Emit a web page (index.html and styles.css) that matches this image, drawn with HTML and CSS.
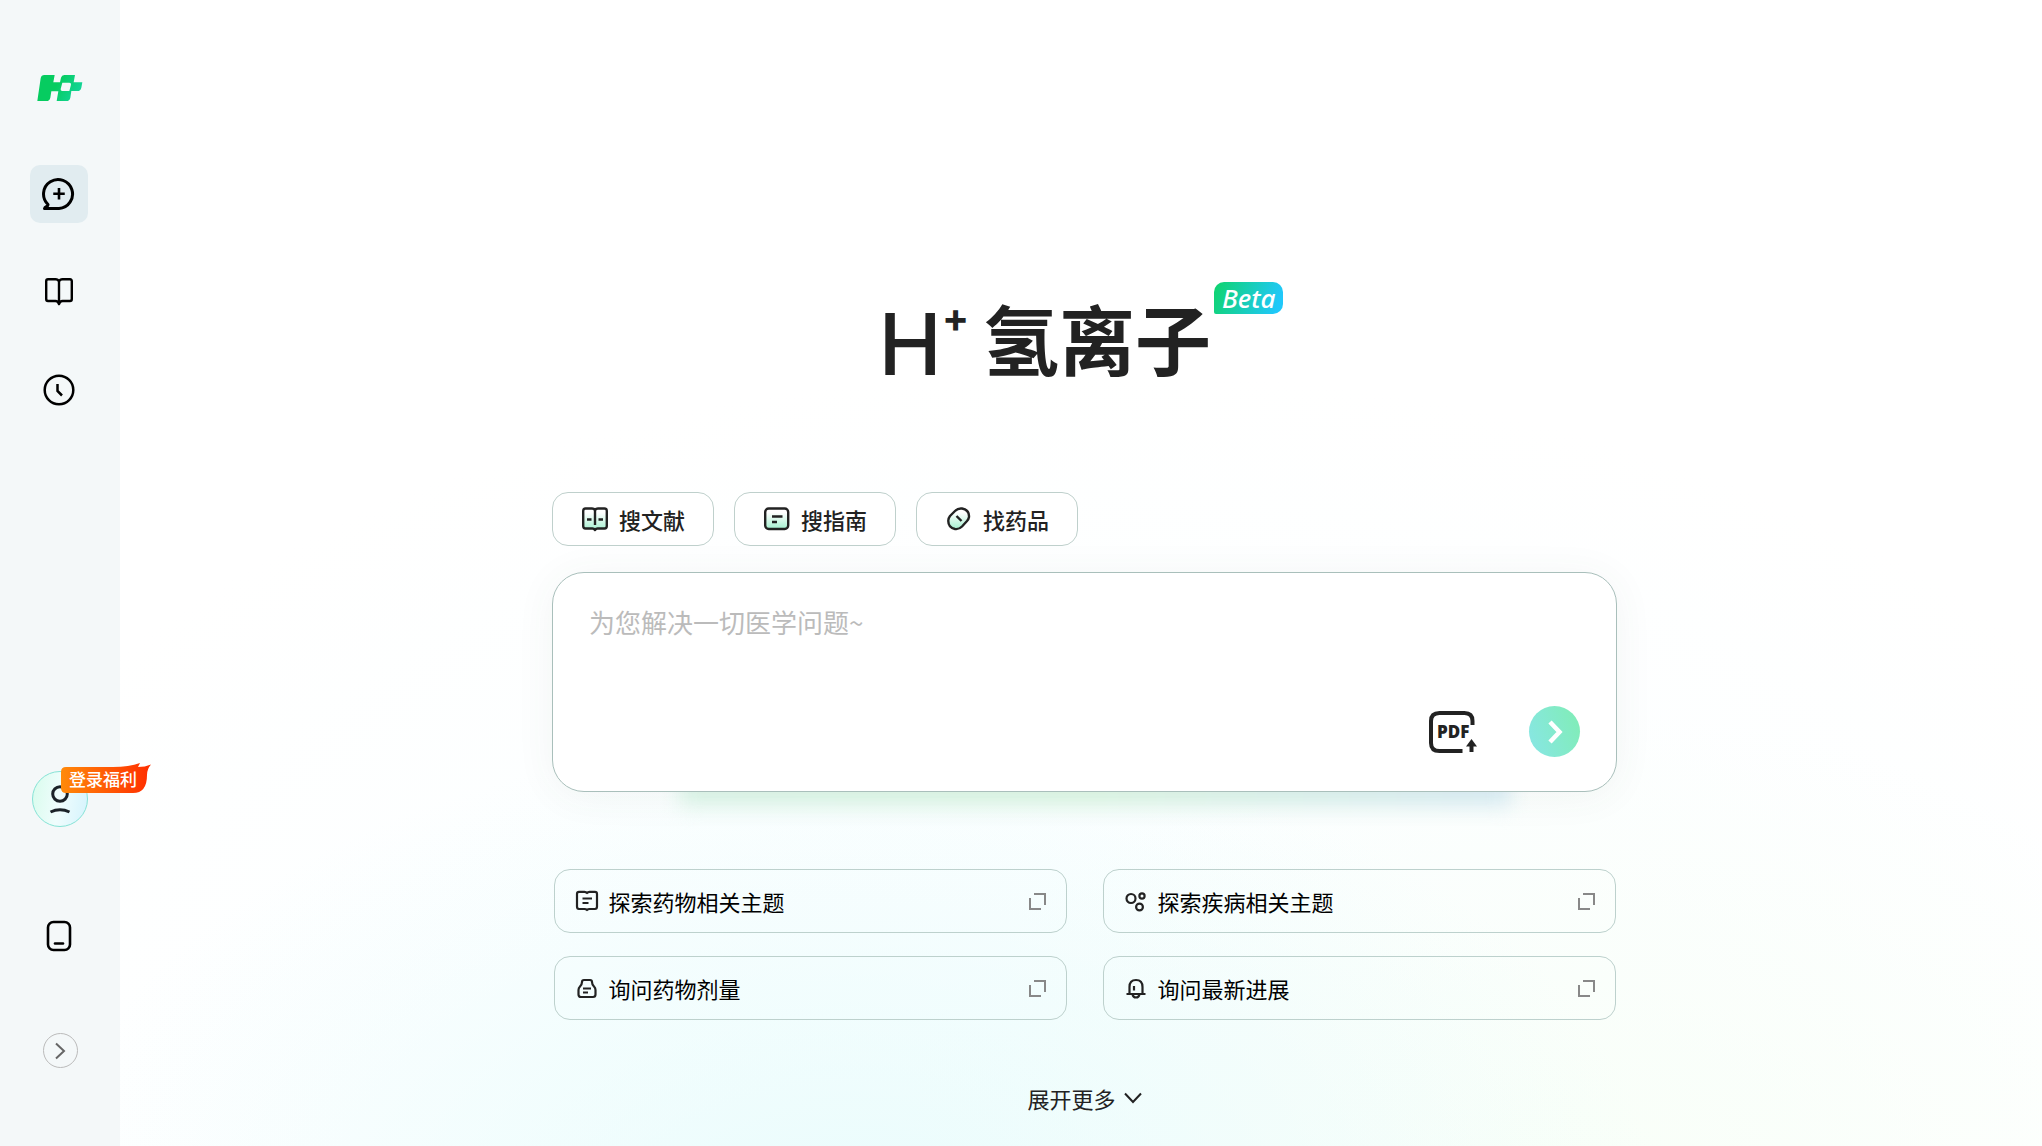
FILE: index.html
```html
<!DOCTYPE html>
<html lang="zh-CN">
  <head>
    <meta charset="UTF-8" />
    <meta name="viewport" content="width=device-width, initial-scale=1.0" />
    <title>H+ 氢离子</title>
    <link rel="stylesheet" href="styles.css">
  </head>
  <body>
    <div class="layout">
      <aside class="sidebar">
        <a class="logo" href="#" aria-label="氢离子">
          <svg width="46" height="28" viewBox="113 72 138 84">
            <defs>
              <linearGradient id="logoFill" x1="0" y1="0" x2="1" y2="0.3">
                <stop offset="0.5" stop-color="#06cc60" />
                <stop offset="1" stop-color="#12d494" />
              </linearGradient>
            </defs>
            <path fill="url(#logoFill)" fill-rule="evenodd" d="M135 75H166L162 97H182L185 83Q187 75 195 75H227L223 97H249L246 113Q244 123 234 123H216L213 143Q211 153 201 153H172L177 124H156L153 143Q151 153 141 153H114L124 85Q126 75 135 75ZM189 98L184 117Q183 123 189 123H210L215 104Q216 98 210 98Z" />
          </svg>
        </a>

        <nav class="nav">
          <button class="nav-btn active" type="button" aria-label="新对话">
            <svg width="34" height="34" viewBox="0 0 34 34" fill="none" stroke="#000" stroke-width="3" stroke-linejoin="round">
              <path d="M17 31.500H2.500C3 29.500 6.500 29.500 6 27.500A14.500 14.500 0 1 1 17 31.500Z" />
              <path d="M17 11V22.500M11.250 16.750H22.750" stroke-width="2.600" />
            </svg>
          </button>
          <button class="nav-btn" type="button" aria-label="知识库">
            <svg width="30" height="30" viewBox="0 0 30 30" fill="none" stroke="#000" stroke-width="2.400" stroke-linejoin="round">
              <path d="M15 4.500Q14 2.300 11.500 2.300H4Q2.200 2.300 2.200 4.200V22Q2.200 24 4 24H11.500Q14 24 15 27Q16 24 18.500 24H26Q27.800 24 27.800 22V4.200Q27.800 2.300 26 2.300H18.500Q16 2.300 15 4.500V27" />
            </svg>
          </button>
          <button class="nav-btn" type="button" aria-label="历史记录">
            <svg width="32" height="32" viewBox="0 0 32 32" fill="none" stroke="#000" stroke-width="2.500">
              <circle cx="16" cy="16" r="14.300" />
              <path d="M14.500 10V17L19 21.500" />
            </svg>
          </button>
        </nav>

        <div class="sidebar-bottom">
          <button class="avatar" type="button">
            <svg width="24" height="32" viewBox="0 0 24 32" fill="none" stroke="#1b2228" stroke-width="3">
              <circle cx="12" cy="11" r="7.300" />
              <path d="M2.500 29Q12 24.500 21.500 29" />
            </svg>
            <span class="login-tag">
              <svg class="login-tag-bg" width="90" height="30" viewBox="0 0 90 30">
                <defs>
                  <linearGradient id="tagFill">
                    <stop offset="0" stop-color="#ff8a0a" />
                    <stop offset="1" stop-color="#ff2d00" />
                  </linearGradient>
                </defs>
                <path fill="url(#tagFill)" d="M5 4H52Q68 4 79 0L77 4Q84 4 90 1.500Q86 6 86 12Q86 30 72 30H5Q0 30 0 25V9Q0 4 5 4Z" />
              </svg>
              <span class="login-tag-text">登录福利</span>
            </span>
          </button>
          <button class="nav-btn device" type="button" aria-label="移动端">
            <svg width="26" height="32" viewBox="0 0 26 32" fill="none" stroke="#000" stroke-width="2.600">
              <rect x="2" y="2" width="22" height="28" rx="5.500" />
              <path d="M9 23.500H17" stroke-linecap="round" />
            </svg>
          </button>
          <button class="expand" type="button" aria-label="展开侧栏">
            <svg width="12" height="18" viewBox="0 0 12 18" fill="none" stroke="#666" stroke-width="2">
              <path d="M2 1.500L10 9L2 16.500" />
            </svg>
          </button>
        </div>
      </aside>

      <main class="main">
        <header class="brand">
          <h1 class="brand-name"><span class="brand-h">H</span><sup class="brand-plus">+</sup><span class="brand-cn">氢离子</span></h1>
          <span class="beta">Beta</span>
        </header>

        <div class="chips">
          <button class="chip" type="button">
            <svg width="28" height="26" viewBox="0 0 28 26" fill="none" stroke="#222" stroke-width="2.400" stroke-linejoin="round">
              <defs>
                <linearGradient id="iconFill" x1="0" y1="0" x2="0" y2="1">
                  <stop offset="0.2" stop-color="#fff" />
                  <stop offset="1" stop-color="#a4f0cf" />
                </linearGradient>
              </defs>
              <path fill="url(#iconFill)" d="M14 4Q13 2.500 11 2.500H4.500Q2.200 2.500 2.200 5V20Q2.200 22.500 4.500 22.500H11.500Q13 22.500 14 24Q15 22.500 16.500 22.500H23.500Q25.800 22.500 25.800 20V5Q25.800 2.500 23.500 2.500H17Q15 2.500 14 4Z" />
              <path d="M14 4V19M6 13.500H10.500M17.500 13.500H22" />
            </svg>
            搜文献
          </button>
          <button class="chip" type="button">
            <svg width="28" height="26" viewBox="0 0 28 26" fill="none" stroke="#222" stroke-width="2.400">
              <rect fill="url(#iconFill)" x="2.200" y="2.500" width="23" height="20.500" rx="3.500" />
              <path d="M9 10.500H19.500M9 16H14" />
            </svg>
            搜指南
          </button>
          <button class="chip" type="button">
            <svg width="28" height="26" viewBox="0 0 28 26" fill="none" stroke="#222" stroke-width="2.400">
              <path fill="url(#iconFill)" d="M5 10L10 5Q13 2 17 2.500Q24.500 4 24 11Q23.700 13 22 15L17 20.500Q14 23.600 10 23Q3 21.500 3.300 14.500Q3.500 12 5 10Z" />
              <path d="M11.500 10L16.500 15" />
            </svg>
            找药品
          </button>
        </div>

        <form class="ask">
          <div class="ask-box">
            <textarea class="ask-input" rows="2" aria-label="医学问题" placeholder="为您解决一切医学问题~"></textarea>
            <div class="ask-actions">
              <button class="pdf-btn" type="button" aria-label="上传 PDF">
                <svg width="50" height="44" viewBox="0 0 50 44" fill="none" stroke="#222" stroke-width="4">
                  <path d="M44.500 15V11Q44.500 3 36.500 3H11.500Q3 3 3 11V33Q3 41 11.500 41H34.500" />
                  <path d="M43.500 42V34" />
                  <path fill="#222" stroke="none" d="M43.500 29L49 36.500H38Z" />
                  <text class="pdf-text" x="9" y="28">PDF</text>
                </svg>
              </button>
              <button class="send-btn" type="submit" aria-label="发送">
                <svg width="16" height="26" viewBox="0 0 16 26" fill="none" stroke="#fff" stroke-width="4.500">
                  <path d="M3 3L12.500 13L3 23" />
                </svg>
              </button>
            </div>
          </div>
        </form>

        <div class="topics">
          <a class="topic" href="#">
            <svg width="24" height="24" viewBox="0 0 24 24" fill="none" stroke="#222" stroke-width="2.200" stroke-linejoin="round">
              <path d="M12 4Q11 2.800 9.500 2.800H4Q2 2.800 2 5V17.500Q2 20 4 20H9.500Q11 20 12 21Q13 20 14.500 20H20Q22 20 22 17.500V5Q22 2.800 20 2.800H14.500Q13 2.800 12 4Z" />
              <path d="M7.500 9.500H17M7.500 14H13.500" />
            </svg>
            <span class="topic-name">探索药物相关主题</span>
            <svg class="topic-open" width="17" height="17" viewBox="0 0 17 17" fill="none" stroke="#888" stroke-width="2">
              <path d="M5 1H16V12M1 5V16H12" />
            </svg>
          </a>
          <a class="topic" href="#">
            <svg width="24" height="24" viewBox="0 0 24 24" fill="none" stroke="#222" stroke-width="2.200">
              <circle cx="7" cy="9.500" r="4.500" />
              <circle cx="18" cy="7" r="2.600" />
              <circle cx="15.500" cy="18" r="3.400" />
            </svg>
            <span class="topic-name">探索疾病相关主题</span>
            <svg class="topic-open" width="17" height="17" viewBox="0 0 17 17" fill="none" stroke="#888" stroke-width="2">
              <path d="M5 1H16V12M1 5V16H12" />
            </svg>
          </a>
          <a class="topic" href="#">
            <svg width="24" height="24" viewBox="0 0 24 24" fill="none" stroke="#222" stroke-width="2.200" stroke-linejoin="round">
              <path d="M9 4H15Q17 4 17 6Q17 8.500 19 10.500Q20.500 12 20.500 14V18.500Q20.500 21 18 21H6Q3.500 21 3.500 18.500V14Q3.500 12 5 10.500Q7 8.500 7 6Q7 4 9 4Z" />
              <path d="M8 12.500H16M8 16.500H13" />
            </svg>
            <span class="topic-name">询问药物剂量</span>
            <svg class="topic-open" width="17" height="17" viewBox="0 0 17 17" fill="none" stroke="#888" stroke-width="2">
              <path d="M5 1H16V12M1 5V16H12" />
            </svg>
          </a>
          <a class="topic" href="#">
            <svg width="24" height="24" viewBox="0 0 24 24" fill="none" stroke="#222" stroke-width="2.200">
              <path d="M2.500 18H21.500M5.500 18V11Q5.500 4 12 4Q18.500 4 18.500 11V18M8.500 18Q9 21.500 12 21.500Q15 21.500 15.500 18M10 10V14.500" />
            </svg>
            <span class="topic-name">询问最新进展</span>
            <svg class="topic-open" width="17" height="17" viewBox="0 0 17 17" fill="none" stroke="#888" stroke-width="2">
              <path d="M5 1H16V12M1 5V16H12" />
            </svg>
          </a>
        </div>

        <button class="more" type="button">
          展开更多
          <svg width="18" height="12" viewBox="0 0 18 12" fill="none" stroke="#222" stroke-width="2">
            <path d="M1 1.500L9 10L17 1.500" />
          </svg>
        </button>
      </main>
    </div>
  </body>
</html>
```

FILE: styles.css
```css
* {
  box-sizing: border-box;
}
body {
  margin: 0;
  font-family: "Noto Sans CJK SC", sans-serif;
  font-size: 22px;
  color: #222;
  background: #fff;
}
button {
  padding: 0;
  border: none;
  background: none;
  font-family: inherit;
  font-size: inherit;
  color: inherit;
  cursor: pointer;
}
a {
  color: inherit;
  text-decoration: none;
}
svg {
  display: block;
  flex-shrink: 0;
}
.layout {
  display: flex;
  min-height: 100vh;
}

/* 侧边栏 */
.sidebar {
  display: flex;
  flex-direction: column;
  align-items: center;
  flex-shrink: 0;
  width: 120px;
  padding: 74px 0 78px;
  background: #f4f8f9;
}
.nav {
  display: flex;
  flex-direction: column;
  gap: 40px;
  margin-top: 63px;
}
.nav-btn {
  display: flex;
  align-items: center;
  justify-content: center;
  width: 58px;
  height: 58px;
  margin-right: 2px;
  border-radius: 10px;
}
.nav-btn.active {
  background: #e1ecf0;
}
.sidebar-bottom {
  display: flex;
  flex-direction: column;
  align-items: center;
  margin-top: auto;
}
.avatar {
  position: relative;
  display: flex;
  align-items: center;
  justify-content: center;
  width: 56px;
  height: 56px;
  border: 1px solid #86e3d6;
  border-radius: 50%;
  background: linear-gradient(100deg, #d8fcec, #f0fdfd 50%, #d4f3fd);
}
.login-tag {
  position: absolute;
  top: -9px;
  left: 28px;
  width: 90px;
  height: 30px;
}
.login-tag-bg {
  position: absolute;
  top: 0;
  left: 0;
}
.login-tag-text {
  position: absolute;
  top: 3px;
  left: 8px;
  font-size: 17px;
  font-weight: 500;
  line-height: 26px;
  color: #fff;
  white-space: nowrap;
}
.device {
  margin-top: 80px;
  margin-bottom: 68px;
}
.expand {
  display: flex;
  align-items: center;
  justify-content: center;
  width: 35px;
  height: 35px;
  border: 1px solid #bbb;
  border-radius: 50%;
}

/* 主区域 */
.main {
  display: flex;
  flex: 1;
  flex-direction: column;
  align-items: center;
  min-width: 0;
  padding: 282px 32px 24px 39px;
  background:
    radial-gradient(ellipse 42% 42% at 38% 106%, rgba(232, 252, 252, 0.9), rgba(244, 254, 255, 0)),
    radial-gradient(ellipse 36% 42% at 76% 104%, rgba(248, 255, 247, 0.9), rgba(252, 255, 250, 0)),
    radial-gradient(ellipse 62% 60% at 50% 92%, rgba(249, 254, 255, 0.9), rgba(255, 255, 255, 0));
}
.brand {
  display: flex;
  align-items: flex-start;
  gap: 3px;
  margin-right: 7px;
}
.brand-name {
  display: flex;
  align-items: flex-start;
  margin: 18px 0 0;
}
.brand-h {
  font-family: Inter, sans-serif;
  font-size: 85px;
  font-weight: 500;
  line-height: 90px;
}
.brand-plus {
  font-family: Inter, sans-serif;
  font-size: 40px;
  font-weight: 700;
  line-height: 36px;
}
.brand-cn {
  margin-left: 14px;
  font-size: 76px;
  font-weight: 700;
  line-height: 74px;
}
.beta {
  padding: 0 8px;
  border-radius: 10px 10px 10px 2px;
  background: linear-gradient(110deg, #0fd46c, #20c8fa 90%);
  font-family: "Noto Sans", sans-serif;
  font-size: 26px;
  font-style: italic;
  font-weight: 500;
  line-height: 32px;
  color: #fff;
}
.chips {
  display: flex;
  gap: 20px;
  width: 100%;
  max-width: 1065px;
  margin-top: 102px;
}
.chip {
  display: flex;
  align-items: center;
  gap: 10px;
  height: 54px;
  padding: 0 28px;
  border: 1px solid #bfd0cc;
  border-radius: 16px;
  background: #fff;
  font-weight: 500;
}
.ask {
  position: relative;
  z-index: 0;
  width: 100%;
  max-width: 1065px;
  margin-top: 26px;
}
/* 输入框底部的彩色光晕 */
.ask::after {
  content: "";
  position: absolute;
  z-index: -1;
  right: 10%;
  bottom: -14px;
  left: 12%;
  height: 40px;
  background: linear-gradient(90deg, #dcf6e9, #dcf7e5 50%, #daeef6);
  filter: blur(10px);
}
.ask-box {
  padding: 31px 36px 34px;
  border: 1px solid #a9bfbb;
  border-radius: 32px;
  background: #fff;
  box-shadow: 0 4px 40px rgba(60, 80, 75, 0.06);
}
.ask-input {
  display: block;
  width: 100%;
  height: 102px;
  padding: 0;
  border: none;
  outline: none;
  resize: none;
  background: none;
  font-family: inherit;
  font-size: 26px;
  line-height: 36px;
}
.ask-input::placeholder {
  color: #bbb;
}
.ask-actions {
  display: flex;
  align-items: center;
  justify-content: flex-end;
  gap: 51px;
}
.pdf-text {
  fill: #222;
  stroke: none;
  font-family: "Open Sans", sans-serif;
  font-size: 17px;
  font-weight: 800;
}
.send-btn {
  display: flex;
  align-items: center;
  justify-content: center;
  width: 51px;
  height: 51px;
  border-radius: 50%;
  background: linear-gradient(70deg, #88e6e6, #80edb4);
}
.topics {
  display: grid;
  grid-template-columns: 1fr 1fr;
  gap: 23px 36px;
  width: 100%;
  max-width: 1062px;
  margin-top: 77px;
}
.topic {
  display: flex;
  align-items: center;
  gap: 10px;
  height: 64px;
  padding: 0 20px;
  border: 1px solid #bdd1cd;
  border-radius: 16px;
  color: #000;
}
.topic-open {
  margin-left: auto;
}
.more {
  display: flex;
  align-items: center;
  gap: 8px;
  margin-top: 62px;
}
```
